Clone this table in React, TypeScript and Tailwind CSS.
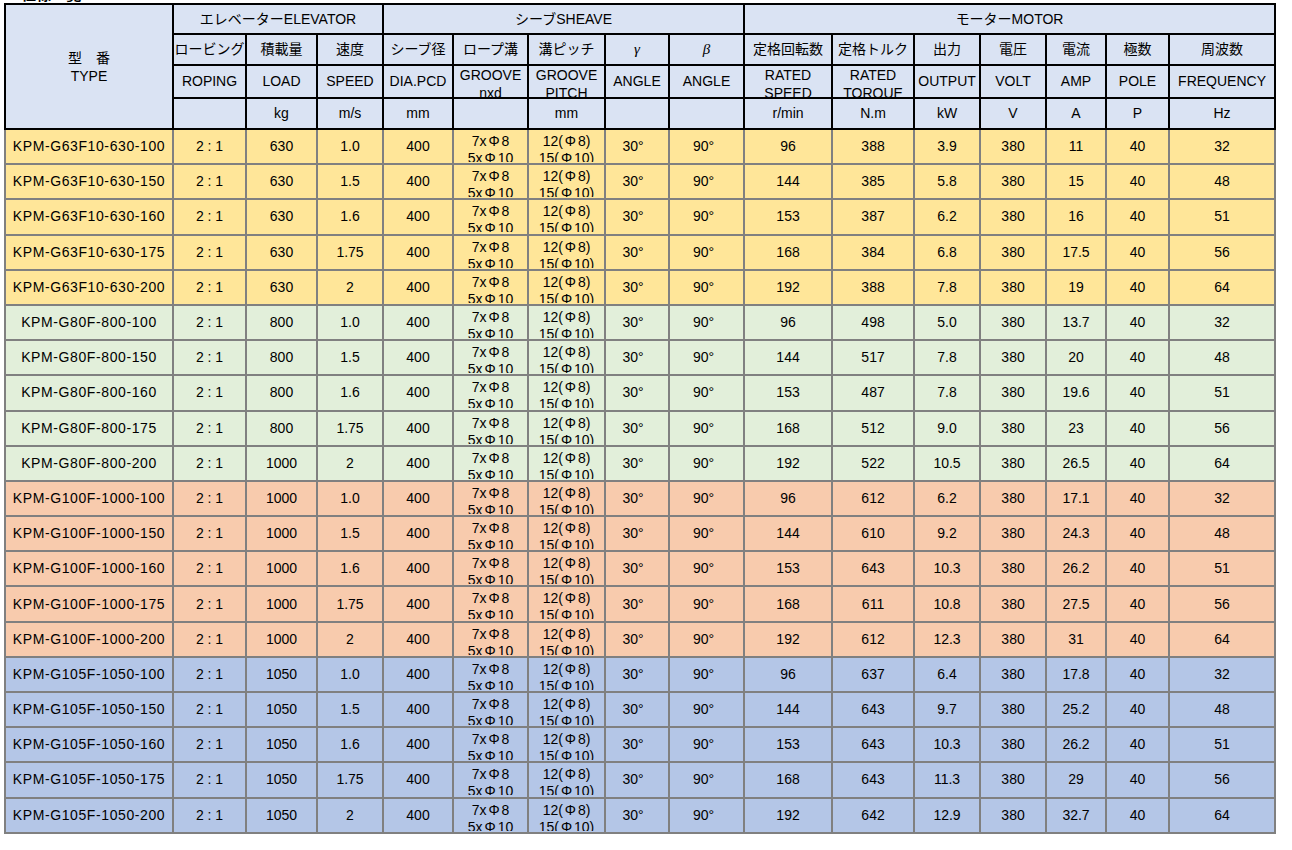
import React from 'react';

type Group = {
  bg: string;
  rows: string[][];
};

// model, load, speed, rpm, torque, output, amp, freq
const groups: Group[] = [
  {
    bg: 'bg-[#FFE699]',
    rows: [
      ['KPM-G63F10-630-100', '630', '1.0', '96', '388', '3.9', '11', '32'],
      ['KPM-G63F10-630-150', '630', '1.5', '144', '385', '5.8', '15', '48'],
      ['KPM-G63F10-630-160', '630', '1.6', '153', '387', '6.2', '16', '51'],
      ['KPM-G63F10-630-175', '630', '1.75', '168', '384', '6.8', '17.5', '56'],
      ['KPM-G63F10-630-200', '630', '2', '192', '388', '7.8', '19', '64'],
    ],
  },
  {
    bg: 'bg-[#E2EFDA]',
    rows: [
      ['KPM-G80F-800-100', '800', '1.0', '96', '498', '5.0', '13.7', '32'],
      ['KPM-G80F-800-150', '800', '1.5', '144', '517', '7.8', '20', '48'],
      ['KPM-G80F-800-160', '800', '1.6', '153', '487', '7.8', '19.6', '51'],
      ['KPM-G80F-800-175', '800', '1.75', '168', '512', '9.0', '23', '56'],
      ['KPM-G80F-800-200', '1000', '2', '192', '522', '10.5', '26.5', '64'],
    ],
  },
  {
    bg: 'bg-[#F8CBAD]',
    rows: [
      ['KPM-G100F-1000-100', '1000', '1.0', '96', '612', '6.2', '17.1', '32'],
      ['KPM-G100F-1000-150', '1000', '1.5', '144', '610', '9.2', '24.3', '48'],
      ['KPM-G100F-1000-160', '1000', '1.6', '153', '643', '10.3', '26.2', '51'],
      ['KPM-G100F-1000-175', '1000', '1.75', '168', '611', '10.8', '27.5', '56'],
      ['KPM-G100F-1000-200', '1000', '2', '192', '612', '12.3', '31', '64'],
    ],
  },
  {
    bg: 'bg-[#B4C6E7]',
    rows: [
      ['KPM-G105F-1050-100', '1050', '1.0', '96', '637', '6.4', '17.8', '32'],
      ['KPM-G105F-1050-150', '1050', '1.5', '144', '643', '9.7', '25.2', '48'],
      ['KPM-G105F-1050-160', '1050', '1.6', '153', '643', '10.3', '26.2', '51'],
      ['KPM-G105F-1050-175', '1050', '1.75', '168', '643', '11.3', '29', '56'],
      ['KPM-G105F-1050-200', '1050', '2', '192', '642', '12.9', '32.7', '64'],
    ],
  },
];

const th = 'border-2 border-black bg-[#DAE3F3] p-0 text-center align-middle font-normal whitespace-nowrap';
const td = 'border-2 border-[#808080] p-0 text-center align-middle whitespace-nowrap';

function Clip({ a, b }: { a: string; b: string }) {
  return (
    <div className="h-[31px] overflow-hidden leading-[18px]">
      {a}
      <br />
      {b}
    </div>
  );
}

// wide phi like the sheet's gothic font
const Phi = () => <span className="inline-block w-[15px] text-center">Φ</span>;

export default function App() {
  return (
    <div className="min-h-screen bg-white text-black font-['Liberation_Sans','Noto_Sans_CJK_JP',sans-serif] text-[14px]">
      <p className="-mt-[13px] pl-[8px] leading-[16px] text-[15px] font-bold">■ 仕様一覧 / SPEC LIST</p>
      <table className="ml-[4px] w-[1272px] table-fixed border-collapse">
        <colgroup>
          <col className="w-[168px]" />
          <col className="w-[73px]" />
          <col className="w-[71px]" />
          <col className="w-[66px]" />
          <col className="w-[70px]" />
          <col className="w-[75px]" />
          <col className="w-[77px]" />
          <col className="w-[64px]" />
          <col className="w-[75px]" />
          <col className="w-[88px]" />
          <col className="w-[82px]" />
          <col className="w-[66px]" />
          <col className="w-[66px]" />
          <col className="w-[60px]" />
          <col className="w-[63px]" />
          <col className="w-[106px]" />
        </colgroup>
        <thead>
          <tr className="h-[30px]">
            <th rowSpan={4} className={`${th} leading-[18px]`}>
              型　番
              <br />
              TYPE
            </th>
            <th colSpan={3} className={th}>エレベーターELEVATOR</th>
            <th colSpan={5} className={th}>シーブSHEAVE</th>
            <th colSpan={7} className={th}>モーターMOTOR</th>
          </tr>
          <tr className="h-[31px]">
            <th className={th}>ロービング</th>
            <th className={th}>積載量</th>
            <th className={th}>速度</th>
            <th className={th}>シーブ径</th>
            <th className={th}>ロープ溝</th>
            <th className={th}>溝ピッチ</th>
            <th className={`${th} font-['Liberation_Serif',serif] italic text-[15px]`}>γ</th>
            <th className={`${th} font-['Liberation_Serif',serif] italic text-[15px]`}>β</th>
            <th className={th}>定格回転数</th>
            <th className={th}>定格トルク</th>
            <th className={th}>出力</th>
            <th className={th}>電圧</th>
            <th className={th}>電流</th>
            <th className={th}>極数</th>
            <th className={th}>周波数</th>
          </tr>
          <tr className="h-[33px]">
            <th className={th}>ROPING</th>
            <th className={th}>LOAD</th>
            <th className={th}>SPEED</th>
            <th className={th}>DIA.PCD</th>
            <th className={`${th} align-top`}>
              <Clip a="GROOVE" b="nxd" />
            </th>
            <th className={`${th} align-top`}>
              <Clip a="GROOVE" b="PITCH" />
            </th>
            <th className={th}>ANGLE</th>
            <th className={th}>ANGLE</th>
            <th className={`${th} align-top`}>
              <Clip a="RATED" b="SPEED" />
            </th>
            <th className={`${th} align-top`}>
              <Clip a="RATED" b="TORQUE" />
            </th>
            <th className={th}>OUTPUT</th>
            <th className={th}>VOLT</th>
            <th className={th}>AMP</th>
            <th className={th}>POLE</th>
            <th className={th}>FREQUENCY</th>
          </tr>
          <tr className="h-[31px]">
            <th className={th}></th>
            <th className={th}>kg</th>
            <th className={th}>m/s</th>
            <th className={th}>mm</th>
            <th className={th}></th>
            <th className={th}>mm</th>
            <th className={th}></th>
            <th className={th}></th>
            <th className={th}>r/min</th>
            <th className={th}>N.m</th>
            <th className={th}>kW</th>
            <th className={th}>V</th>
            <th className={th}>A</th>
            <th className={th}>P</th>
            <th className={th}>Hz</th>
          </tr>
        </thead>
        <tbody>
          {groups.map((g) =>
            g.rows.map((r) => (
              <tr key={r[0]} className={`h-[35.2px] ${g.bg}`}>
                <td className={`${td} tracking-[0.6px]`}>{r[0]}</td>
                <td className={td}>2 : 1</td>
                <td className={td}>{r[1]}</td>
                <td className={td}>{r[2]}</td>
                <td className={td}>400</td>
                <td className={`${td} align-top`}>
                  <div className="h-[32px] overflow-hidden pt-[3px] leading-[17px]">
                    7x<Phi />8
                    <br />
                    5x<Phi />10
                  </div>
                </td>
                <td className={`${td} align-top`}>
                  <div className="h-[32px] overflow-hidden pt-[3px] leading-[17px]">
                    12(<Phi />8)
                    <br />
                    15(<Phi />10)
                  </div>
                </td>
                <td className={`${td} pr-[8px]`}>30°</td>
                <td className={`${td} pr-[6px]`}>90°</td>
                <td className={td}>{r[3]}</td>
                <td className={td}>{r[4]}</td>
                <td className={td}>{r[5]}</td>
                <td className={td}>380</td>
                <td className={td}>{r[6]}</td>
                <td className={td}>40</td>
                <td className={td}>{r[7]}</td>
              </tr>
            )),
          )}
        </tbody>
      </table>
    </div>
  );
}
